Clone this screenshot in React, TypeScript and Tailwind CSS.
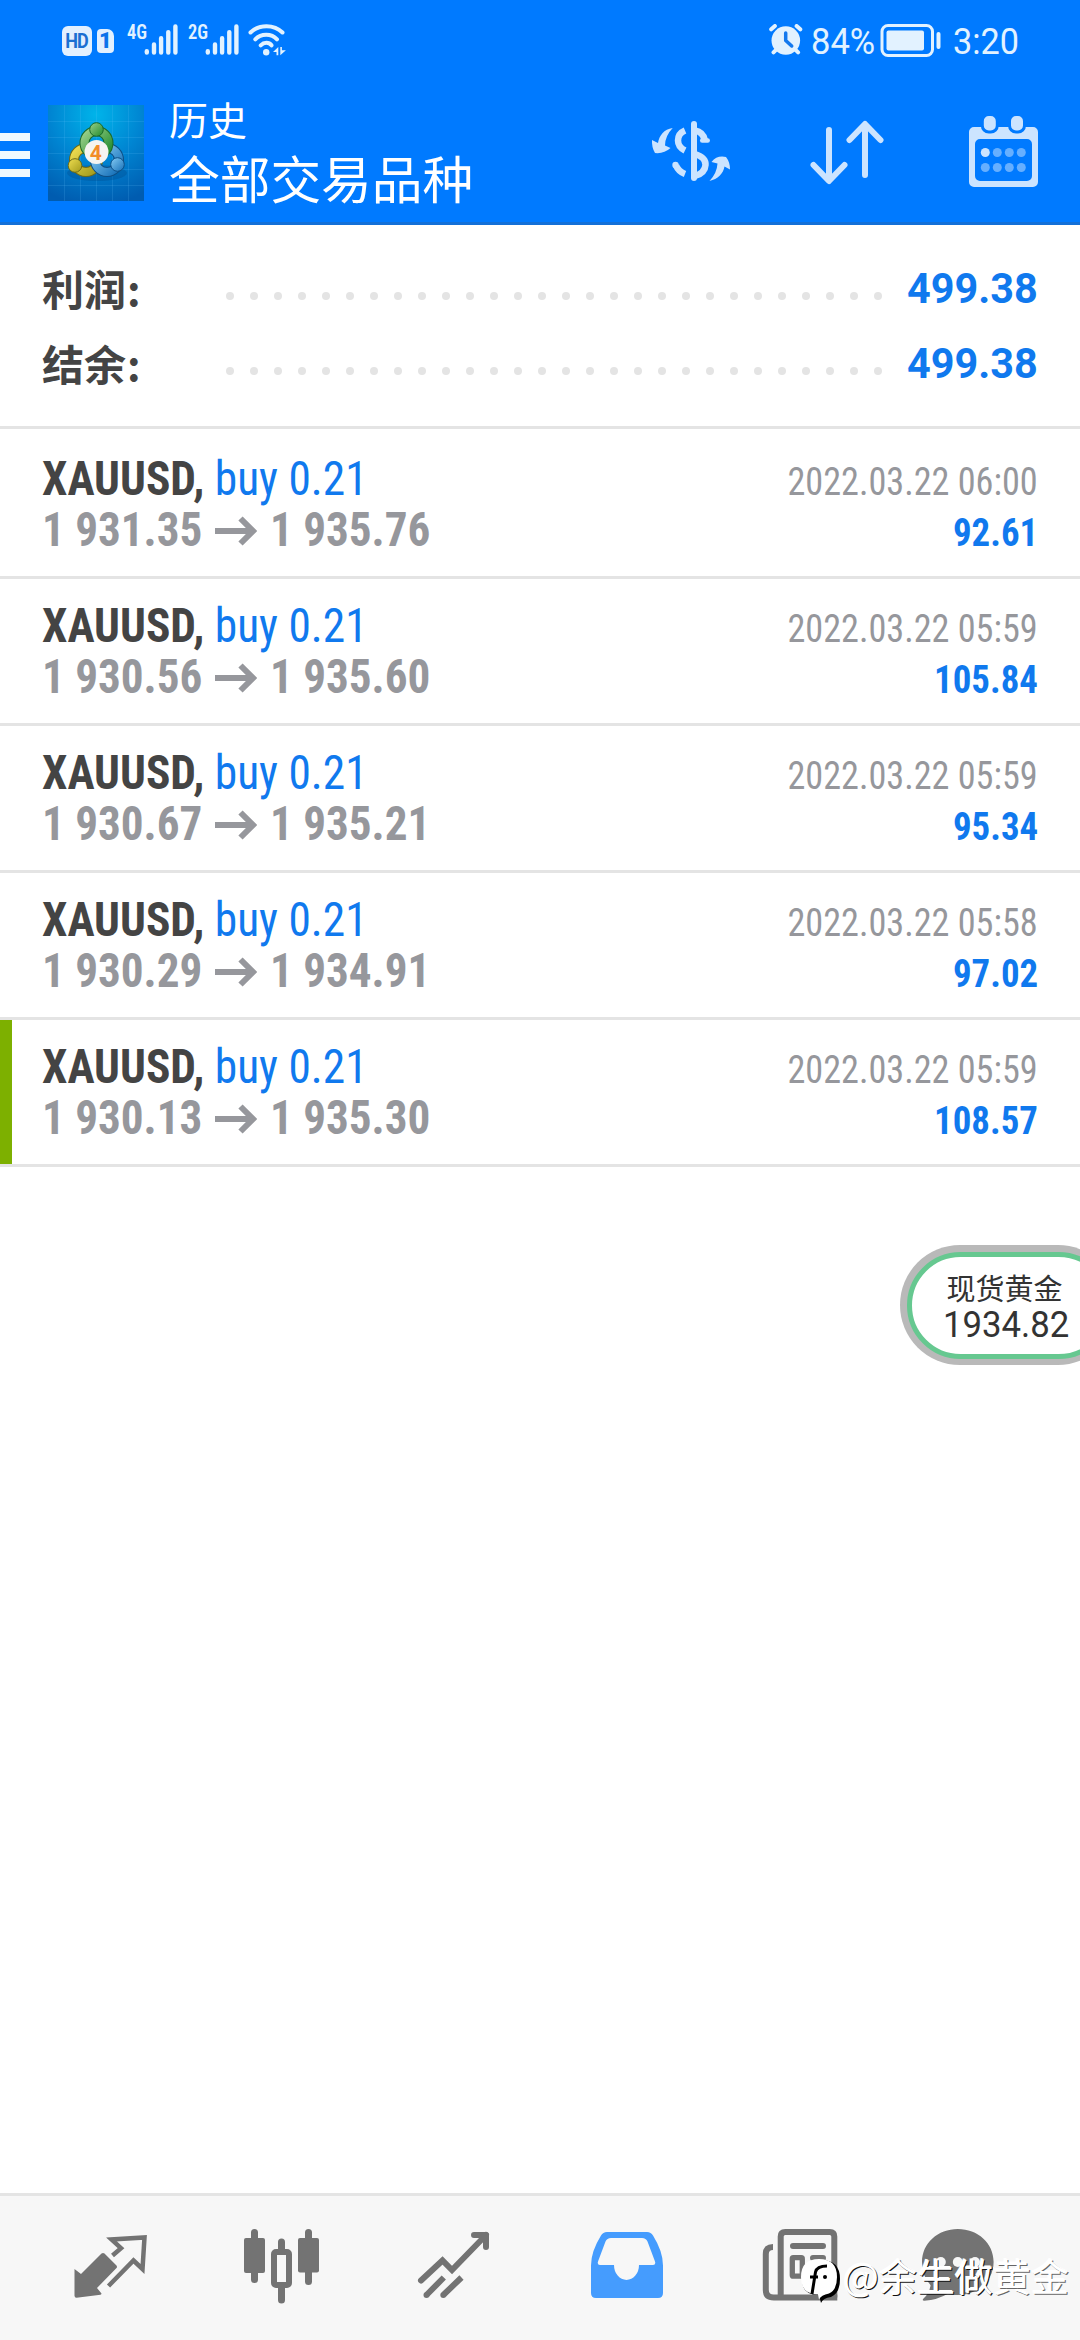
const deals = [
  { id: 1, open: '1 931.35', close: '1 935.76', time: '2022.03.22 06:00', profit: '92.61' },
  { id: 2, open: '1 930.56', close: '1 935.60', time: '2022.03.22 05:59', profit: '105.84' },
  { id: 3, open: '1 930.67', close: '1 935.21', time: '2022.03.22 05:59', profit: '95.34' },
  { id: 4, open: '1 930.29', close: '1 934.91', time: '2022.03.22 05:58', profit: '97.02' },
  { id: 5, open: '1 930.13', close: '1 935.30', time: '2022.03.22 05:59', profit: '108.57', marked: true },
];

const summary = [
  { label: '利润', value: '499.38' },
  { label: '结余', value: '499.38' },
];

function Signal({ label }: { label: string }) {
  return (
    <div className="flex h-[31px] items-start">
      <span className="w-[17px] origin-left scale-x-[0.92] font-['Roboto_Condensed'] text-[20px] leading-[16px] font-semibold">
        {label}
      </span>
      <svg width="34" height="31" viewBox="144 24.5 34 31" fill="none" stroke="currentColor" strokeWidth="4.4" strokeLinecap="round">
        <path d="M146.8 51.7v1.3M154 45v8M161.1 38.7v14.3M168.3 32.6v20.4M175.4 27v26" />
      </svg>
    </div>
  );
}

function StatusBar() {
  return (
    <div className="flex h-[80px] items-start justify-between pt-[24px] pr-[61px] pl-[62px] text-[#e2f2ff]">
      <div className="flex items-start">
        <span className="mt-[2px] flex h-[30px] w-[30px] items-center justify-center rounded-[6px] bg-[#e2f0ff] font-['Roboto'] text-[20px] leading-none font-bold tracking-[-1px] text-[#1b6fd2]">
          <span className="origin-center scale-x-[0.9]">HD</span>
        </span>
        <span className="mt-[5px] ml-[5px] flex h-[24px] w-[17px] items-center justify-center rounded-[4px] rounded-tr-[7px] bg-[#e2f0ff] font-['Roboto'] text-[22px] leading-none font-black text-[#0c72ea]">
          1
        </span>
        <div className="ml-[13px]">
          <Signal label="4G" />
        </div>
        <div className="ml-[10px]">
          <Signal label="2G" />
        </div>
        <svg className="ml-[9px]" width="38" height="32" viewBox="248 24 38 32" fill="none" stroke="currentColor" strokeWidth="4" strokeLinecap="round">
          <path d="M250.5 32.5C259 24 274 24 282.5 32.5M255.3 39.3C261 33.3 271.5 33.3 277 39.3M260.7 45.3C264 42 269 42 271.5 45.3" />
          <circle cx="266.2" cy="52.3" r="3.2" fill="currentColor" stroke="none" />
          <path d="M278.3 47v8.3h-1.8v-3.3h-3.5zM280.3 55.3v-8.3h1.6v3.3h4z" fill="currentColor" stroke="none" />
        </svg>
      </div>
      <div className="flex items-start">
        <svg width="34" height="32" viewBox="768.5 25 34 32" fill="none" stroke="currentColor" strokeLinecap="round">
          <circle cx="785.3" cy="41.5" r="14.3" fill="currentColor" stroke="none" />
          <path d="M770.7 30.3l3.7-3.3M799.8 30.3l-3.7-3.3M773 53.3l3-3M797.6 53.3l-3-3" strokeWidth="4" />
          <path d="M785.2 34v7.5l6 5.5" stroke="#1479ee" strokeWidth="3.5" strokeLinejoin="round" />
        </svg>
        <span className="mt-px ml-[8px] w-[65px] origin-left scale-x-[0.96] font-['Roboto'] text-[36px] leading-[35px]">84%</span>
        <svg className="ml-[4px]" width="61" height="34" viewBox="879.5 24 61 34">
          <rect x="881.5" y="25.5" width="50.5" height="30" rx="6" fill="none" stroke="currentColor" strokeWidth="3" />
          <rect x="886" y="30.5" width="37.5" height="20" rx="2" fill="currentColor" />
          <rect x="936" y="32" width="4" height="17" rx="2" fill="currentColor" />
        </svg>
        <span className="mt-px ml-[12px] w-[66px] origin-left scale-x-[0.95] font-['Roboto'] text-[36px] leading-[35px]">3:20</span>
      </div>
    </div>
  );
}

function AppLogo() {
  return (
    <svg className="ml-[18px]" width="96" height="96" viewBox="0 0 96 96">
      <defs>
        <radialGradient id="sky" cx="0.5" cy="0.1" r="0.95">
          <stop offset="0" stopColor="#00b4ea" />
          <stop offset="0.5" stopColor="#0085d2" />
          <stop offset="1" stopColor="#005cb0" />
        </radialGradient>
        <linearGradient id="green" x1="0" y1="0" x2="1" y2="1">
          <stop offset="0" stopColor="#9bd08a" />
          <stop offset="1" stopColor="#1f8a2c" />
        </linearGradient>
        <linearGradient id="yellow" x1="0" y1="0" x2="1" y2="1">
          <stop offset="0" stopColor="#eedd50" />
          <stop offset="1" stopColor="#a29a1c" />
        </linearGradient>
        <linearGradient id="blue" x1="0" y1="0" x2="1" y2="1">
          <stop offset="0" stopColor="#86ccf4" />
          <stop offset="1" stopColor="#1670b8" />
        </linearGradient>
      </defs>
      <rect width="96" height="96" fill="url(#sky)" />
      <path
        d="M16.5 0v96M32.5 0v96M48.5 0v96M64.5 0v96M80.5 0v96M0 16.5h96M0 32.5h96M0 48.5h96M0 64.5h96M0 80.5h96"
        stroke="#6cc8ff"
        strokeOpacity="0.16"
      />
      <ellipse cx="49" cy="68" rx="30" ry="8" fill="#003c78" opacity="0.25" />
      <circle cx="38" cy="55" r="12" fill="none" stroke="#6d6a18" strokeWidth="10" />
      <circle cx="38" cy="55" r="12" fill="none" stroke="url(#yellow)" strokeWidth="8" />
      <circle cx="59" cy="55" r="12" fill="none" stroke="#0d4f86" strokeWidth="10" />
      <circle cx="59" cy="55" r="12" fill="none" stroke="url(#blue)" strokeWidth="8" />
      <circle cx="48.5" cy="38" r="12" fill="none" stroke="#1b6828" strokeWidth="10" />
      <circle cx="48.5" cy="38" r="12" fill="none" stroke="url(#green)" strokeWidth="8" />
      <circle cx="48.5" cy="24.5" r="6.8" fill="url(#green)" stroke="#1b6828" />
      <circle cx="27" cy="60.5" r="6.8" fill="url(#yellow)" stroke="#6d6a18" />
      <circle cx="69.5" cy="59.5" r="6.8" fill="url(#blue)" stroke="#0d4f86" />
      <circle cx="48.5" cy="47" r="12" fill="#f5f4f1" />
      <text x="47.8" y="54.5" fontFamily="Roboto" fontSize="21" fontWeight="700" textAnchor="middle" fill="#f28c28">
        4
      </text>
    </svg>
  );
}

function Header() {
  return (
    <header className="h-[225px] border-b-[3px] border-[#1370d8] bg-[#007aff]">
      <StatusBar />
      <div className="flex h-[142px] items-start">
        <div className="mt-[53px] flex w-[30px] flex-col gap-[10px]">
          <span className="h-[8px] bg-[#f0f9ff]" />
          <span className="h-[8px] bg-[#f0f9ff]" />
          <span className="h-[8px] bg-[#f0f9ff]" />
        </div>
        <div className="mt-[25px]">
          <AppLogo />
        </div>
        <div className="mt-[14px] ml-[25px] flex flex-col font-['Noto_Sans_CJK_SC',sans-serif] text-white">
          <span className="text-[39px] leading-[48px]">历史</span>
          <span className="text-[50.7px] leading-[70px]">全部交易品种</span>
        </div>
        <div className="mt-[36px] ml-auto flex items-start pr-[41px]">
          <svg width="80" height="72" viewBox="650 116 80 72" fill="none" stroke="#cce4ff" strokeWidth="6.5">
            <path d="M693 124v54" strokeWidth="6" strokeLinecap="round" />
            <path d="M684 130.5Q677 133.5 677 140.5Q677 147 684 150.5" />
            <path d="M694 130.5Q702 132 703.8 140" />
            <path d="M701.2 140.5h5.5" strokeWidth="4.5" strokeLinecap="round" />
            <path d="M694 154Q705 157.5 704.5 165Q704 173 694 176" />
            <path d="M675 165.5Q677.5 171.5 684 174" />
            <circle cx="674.5" cy="165" r="3.2" fill="#cce4ff" stroke="none" />
            <path d="M671.7 128C663 129 658 136 657 143L651 140Q650.5 147 654 153Q663 154 669.5 148L664 145.5Q664 136 671.7 128Z" fill="#cce4ff" stroke="none" />
            <path d="M708.5 181C717 179 722 174 723.5 166.5L729 169.5Q729 162 725 157Q716 155 710.5 162L716.5 163.5Q716 173 708.5 181Z" fill="#cce4ff" stroke="none" />
          </svg>
          <svg className="ml-[79px]" width="74" height="72" viewBox="809 116 74 72" fill="none" stroke="#cce4ff" strokeWidth="6" strokeLinecap="round" strokeLinejoin="round">
            <path d="M828 130v50M812.5 165l15.5 16l15.5-16" />
            <path d="M864 175v-50M848.5 140l15.5-16l15.5 16" />
          </svg>
          <svg className="ml-[84px]" width="71" height="72" viewBox="967 116 71 72">
            <path
              fillRule="evenodd"
              fill="#cce4ff"
              d="M973 127h59a5 5 0 0 1 5 5v50a5 5 0 0 1-5 5h-59a5 5 0 0 1-5-5v-50a5 5 0 0 1 5-5zM979 139a5 5 0 0 0-5 5v32a5 5 0 0 0 5 5h47a5 5 0 0 0 5-5v-32a5 5 0 0 0-5-5z"
            />
            <g fill="#cce4ff" stroke="#007aff" strokeWidth="3">
              <rect x="981.3" y="114.5" width="15" height="17.5" rx="6.5" />
              <rect x="1008.5" y="114.5" width="15" height="17.5" rx="6.5" />
            </g>
            <g fill="#66afff">
              <circle cx="984.3" cy="152.5" r="4.5" fill="#cce4ff" />
              <circle cx="996.3" cy="152.5" r="4.5" />
              <circle cx="1008.3" cy="152.5" r="4.5" />
              <circle cx="1020.3" cy="152.5" r="4.5" />
              <circle cx="984.3" cy="167.5" r="4.5" />
              <circle cx="996.3" cy="167.5" r="4.5" />
              <circle cx="1008.3" cy="167.5" r="4.5" />
              <circle cx="1020.3" cy="167.5" r="4.5" />
            </g>
          </svg>
        </div>
      </div>
    </header>
  );
}

function DealRow({ deal }: { deal: (typeof deals)[number] }) {
  return (
    <li className="flex h-[147px] border-b-[3px] border-[#e4e4e4]">
      <div className={deal.marked ? 'w-[12px] bg-[#7db000]' : 'w-[12px]'} />
      <div className="flex-1 pt-[21px] pr-[42px] pl-[30px] font-['Roboto_Condensed'] text-[48px] leading-[51px]">
        <div className="flex h-[51px] items-baseline justify-between whitespace-nowrap">
          <span className="origin-left scale-x-[0.945]">
            <span className="font-bold text-[#444]">XAUUSD,</span>
            <span className="text-[#1079ee]"> buy 0.21</span>
          </span>
          <span className="origin-right scale-x-[0.928] text-[39px] text-[#96979c]">{deal.time}</span>
        </div>
        <div className="flex h-[51px] items-baseline whitespace-nowrap">
          <span className="w-[173px] origin-left scale-x-[0.94] font-bold text-[#96979c]">{deal.open}</span>
          <svg className="mr-[13px]" width="42" height="30" viewBox="0 0 42 30" fill="none" stroke="#96979c" strokeWidth="6">
            <path d="M0 15h38M25.5 2.500l12.500 12.500L25.500 27.500" />
          </svg>
          <span className="origin-left scale-x-[0.94] font-bold text-[#96979c]">{deal.close}</span>
          <span className="ml-auto origin-right scale-x-[0.945] text-[39px] font-bold text-[#1079ee]">{deal.profit}</span>
        </div>
      </div>
    </li>
  );
}

function TabBar() {
  return (
    <nav className="flex h-[147px] border-t-[3px] border-[#e4e4e4] bg-[#f7f7f7] px-[24px] text-[#737373]">
      <svg width="172" height="144" viewBox="24 2196 172 144" fill="none">
        <path
          d="M74.5 2269l6.5 5l20.5-20.5q1.5-1 3 0l12 12q1 1.5 0 2.5l-19.500 20l4.500 5.500q0 1-1 1.200l-24 3q-2 0-2-2z"
          fill="currentColor"
        />
        <path d="M112.5 2255.5l8.500-7.300l-9.500-8.700l33-2l-2 31.500l-9-8.500l-25 25.500" stroke="currentColor" strokeWidth="4.5" />
      </svg>
      <svg width="172" height="144" viewBox="196 2196 172 144" fill="none" stroke="currentColor">
        <path d="M254.5 2232.5v47M308.5 2232.5v49M281.5 2242v8M281.5 2288v12" strokeWidth="7" strokeLinecap="round" />
        <rect x="244" y="2238" width="21" height="35" rx="2" fill="currentColor" stroke="none" />
        <rect x="298" y="2238" width="21" height="34.5" rx="2" fill="currentColor" stroke="none" />
        <rect x="274" y="2252" width="15" height="33" rx="2" strokeWidth="6" fill="#f7f7f7" />
      </svg>
      <svg width="172" height="144" viewBox="368 2196 172 144" fill="none" stroke="currentColor" strokeWidth="6">
        <path d="M421 2280.5L442.5 2260.5L452 2270L486 2235" strokeLinecap="round" />
        <path d="M474 2235h12v12" strokeLinecap="round" strokeLinejoin="round" />
        <path d="M443.8 2277.5L427 2294.5M461.5 2277.5L443.8 2294.5" />
        <circle cx="426.5" cy="2295" r="3" fill="currentColor" stroke="none" />
        <circle cx="443.3" cy="2295" r="3" fill="currentColor" stroke="none" />
      </svg>
      <svg width="172" height="144" viewBox="540 2196 172 144">
        <path
          fillRule="evenodd"
          fill="#459cfe"
          d="M607 2232h40q4 0 6 3.500q10 16 10 30v27.500q0 5-5 5h-62q-5 0-5-5v-27.500q0-14 10-30q2-3.500 6-3.500zM611 2238q-4 0-5.500 3.500l-7.500 20q-1 3.500 2 3.500h14a12.500 15 0 0 0 25 0h14q3 0 2-3.500l-7.500-20q-1.500-3.500-5.500-3.500z"
        />
      </svg>
      <svg width="144" height="144" viewBox="712 2196 144 144" fill="none" stroke="currentColor" strokeWidth="6">
        <path d="M834.3 2297.5v-61q0-4.500-4.500-4.500h-44.600q-4.500 0-4.500 4.500v61" />
        <path d="M773 2247q-7.200 0-7.200 7v36q0 7.500 8 7.500h63.500" />
        <path d="M793 2246h30M813 2258h10M813 2270h10" strokeLinecap="round" />
        <rect x="792.3" y="2257.7" width="10" height="18.5" rx="1" strokeWidth="5.3" />
      </svg>
      <svg width="200" height="144" viewBox="856 2196 200 144">
        <path
          fill="currentColor"
          d="M957.8 2229c20 0 35.800 14 35.800 33s-16 33-35.800 33c-4 0-7-.5-10-1.300q-10 6-23.500 7q-2.500 0-1-2q6-5 7.300-13.500q-8.600-9.200-8.600-23.200c0-19 16-33 35.800-33z"
        />
        <g fill="#f7f7f7">
          <circle cx="940.8" cy="2262" r="5" />
          <circle cx="957.8" cy="2262" r="5" />
          <circle cx="975" cy="2262" r="5" />
        </g>
      </svg>
    </nav>
  );
}

export default function App() {
  return (
    <div className="relative flex h-[2340px] w-[1080px] flex-col overflow-hidden bg-white">
      <Header />

      {/* Totals */}
      <section className="h-[204px] border-b-[3px] border-[#e4e4e4] pt-[26px] pr-[42px] pl-[42px]">
        {summary.map((item) => (
          <div key={item.label} className="flex h-[75px] items-center">
            <span className="mt-[-2px] w-[184px] font-['Noto_Sans_CJK_SC',sans-serif] text-[42px] leading-[60px] font-bold text-[#444]">
              {item.label}
              <span className="ml-px">:</span>
            </span>
            <span className="mt-[15px] flex w-[656px] justify-between">
              {Array.from({ length: 28 }, (_, i) => (
                <span key={i} className="h-[8px] w-[8px] rounded-full bg-[#e4e4e4]" />
              ))}
            </span>
            <span className="ml-auto origin-right scale-x-[0.985] font-['Roboto'] text-[42px] leading-[50px] font-bold text-[#1079ee]">
              {item.value}
            </span>
          </div>
        ))}
      </section>

      {/* Deals */}
      <ul className="mt-[3px] flex-1">
        {deals.map((deal) => (
          <DealRow key={deal.id} deal={deal} />
        ))}
      </ul>

      <TabBar />

      {/* Floating quote */}
      <div className="absolute top-[1245px] left-[900px] h-[120px] w-[218px] rounded-full bg-[#b9b9b9] p-[6.5px]">
        <div className="flex h-full flex-col rounded-full border-[5px] border-[#66c890] bg-white pl-[35px] text-[#333]">
          <span className="mt-[11px] font-['Noto_Sans_CJK_SC',sans-serif] text-[29px] leading-[38px] whitespace-nowrap">现货黄金</span>
          <span className="-ml-[4px] origin-left scale-x-[0.965] font-['Roboto'] text-[36px] leading-[38px]">1934.82</span>
        </div>
      </div>

      {/* Watermark */}
      <div className="absolute top-[2247px] left-[799px] flex items-center whitespace-nowrap">
        <svg width="42" height="56" viewBox="799 2249 42 56">
          <path d="M806 2268q4-6 15-6q19 0 19 19q0 14-9 18q-8 1-10 6l-2-8q-17 0-17-15q0-9 4-14z" fill="#000" />
          <path d="M801 2279q0-18 18-18q18 0 18 18q0 13-8 16.500q-8 1.500-10 6l-1-5q-17 0-17-17.500z" fill="#fff" />
          <path d="M812 2296l3.500-22q1.500-6 11.500-6M810 2279h8" fill="none" stroke="#000" strokeWidth="3" />
          <circle cx="825" cy="2279" r="2" fill="#000" />
        </svg>
        <span className="ml-[2px] font-['Noto_Sans_CJK_SC',sans-serif] text-[38px] leading-[56px] font-normal text-white">
          <span className="[text-shadow:1px_1px_0_#111,-1px_-1px_0_#fff]">@余生做</span>
          <span className="[text-shadow:1px_1px_0_#666,-1px_-1px_0_#fff]">黄金</span>
        </span>
      </div>
    </div>
  );
}
